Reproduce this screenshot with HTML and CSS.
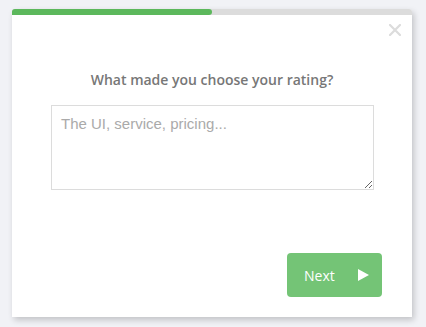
FILE: index.html
```html
<!DOCTYPE html>
<html>
<head>
<meta charset="utf-8">
<link rel="stylesheet" href="styles.css">
</head>
<body>
<div class="card">
  <div class="progress"><div class="progress-fill"></div></div>
  <div class="header">
    <button class="close" aria-label="Close">
      <svg width="12" height="12" viewBox="0 0 12 12"><path d="M1 1L11 11M11 1L1 11" stroke="#dcdcdc" stroke-width="2.2" stroke-linecap="square"/></svg>
    </button>
  </div>
  <h2 class="title">What made you choose your rating?</h2>
  <textarea class="answer" placeholder="The UI, service, pricing..."></textarea>
  <div class="footer">
    <button class="next">Next <span class="arrow"></span></button>
  </div>
</div>
</body>
</html>
```
FILE: styles.css
```css
html, body {
  margin: 0;
  padding: 0;
}
body {
  background: #f1f2f6;
  width: 426px;
  height: 327px;
  overflow: hidden;
  font-family: "Open Sans", sans-serif;
}
.card {
  margin: 9px 0 0 12px;
  width: 400px;
  height: 308px;
  background: #fff;
  border-radius: 3px 3px 0 0;
  box-shadow: 2px 3px 6px rgba(0, 0, 0, 0.2);
  display: flex;
  flex-direction: column;
  box-sizing: border-box;
}
.progress {
  height: 6px;
  background: #dcdcdc;
  border-radius: 3px 3px 0 0;
  overflow: hidden;
}
.progress-fill {
  width: 200px;
  height: 6px;
  background: #5cb85c;
  border-radius: 0 3px 3px 0;
}
.header {
  display: flex;
  justify-content: flex-end;
  padding: 9px 11px 0 0;
  height: 12px;
}
.close {
  border: 0;
  background: none;
  padding: 0;
  width: 12px;
  height: 12px;
  display: block;
}
.close svg {
  display: block;
}
.title {
  margin: 34px 0 0;
  font-size: 14px;
  line-height: 19px;
  font-weight: 600;
  color: #777;
  text-align: center;
}
.answer {
  margin: 16px 0 0 39px;
  width: 323px;
  height: 85px;
  box-sizing: border-box;
  border: 1px solid #dcdcdc;
  border-radius: 0;
  padding: 9px 9px;
  font-family: "Liberation Sans", Arial, sans-serif;
  font-size: 15px;
  color: #555;
  outline: none;
}
.answer::placeholder {
  color: #aaa;
}
.footer {
  margin-top: auto;
  display: flex;
  justify-content: flex-end;
  padding: 0 30px 20px 0;
}
.next {
  width: 95px;
  height: 44px;
  border: 0;
  border-radius: 4px;
  background: #74c476;
  color: #fff;
  font-family: "Open Sans", sans-serif;
  font-size: 14px;
  display: flex;
  align-items: center;
  padding: 0 0 0 17px;
  gap: 23px;
}
.arrow {
  width: 0;
  height: 0;
  border-top: 6px solid transparent;
  border-bottom: 6px solid transparent;
  border-left: 11px solid #fff;
}
```
